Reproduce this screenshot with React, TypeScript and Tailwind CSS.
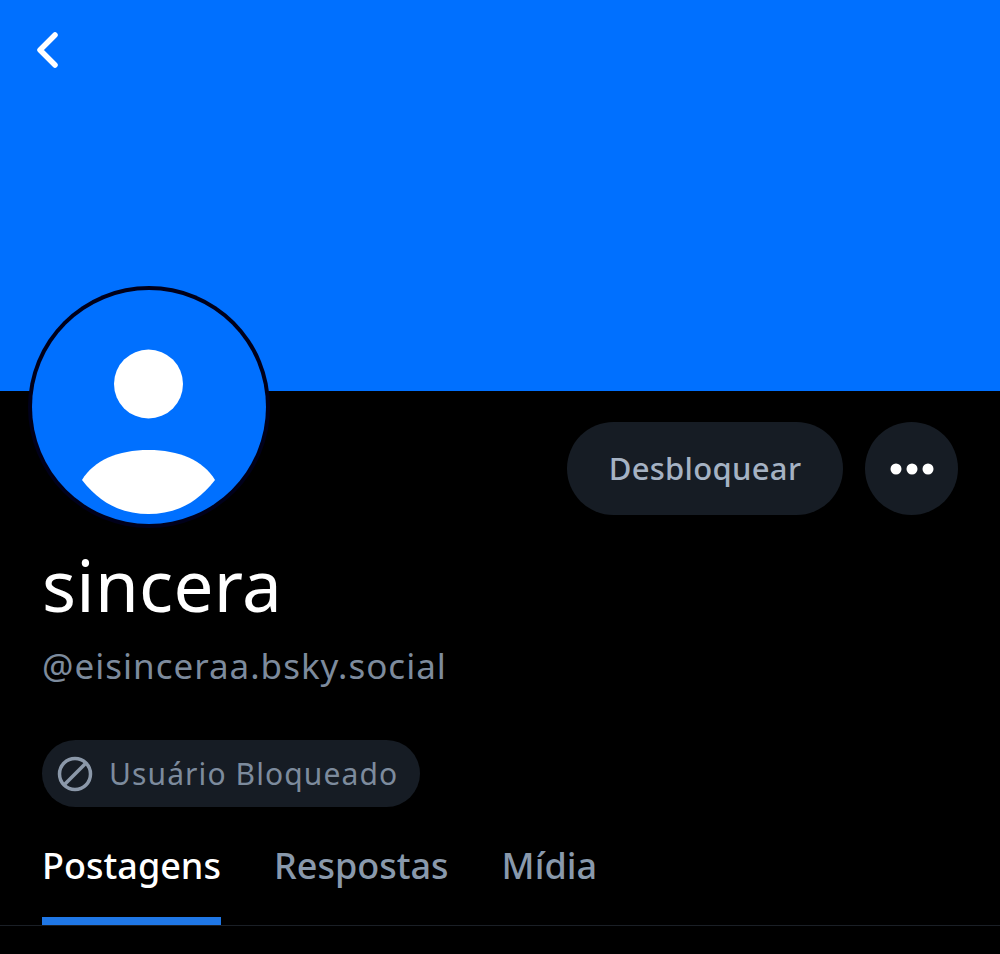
const font = "font-['Noto_Sans',sans-serif]";

function Avatar() {
  return (
    <div className="absolute left-[28px] top-[286px] h-[242px] w-[242px] rounded-full bg-[#00001a] p-[4px]">
      <svg viewBox="0 0 234 234" className="h-full w-full">
        <circle cx="117" cy="117" r="117" fill="#0070ff" />
        <circle cx="116.5" cy="94" r="34.5" fill="#ffffff" />
        <path d="M50 190 C62 170 86 160 116.5 160 C147 160 171 170 183 190 C163 216 140 224 116.5 224 C93 224 70 216 50 190 Z" fill="#ffffff" />
      </svg>
    </div>
  );
}

export default function App() {
  return (
    <div className={`relative h-[954px] w-[1000px] overflow-hidden bg-black ${font}`}>
      <div className="h-[391px] bg-[#0070ff] pl-[36px] pt-[32px]">
        <svg viewBox="0 0 22 36" className="h-[36px] w-[22px]" fill="none" stroke="#ffffff" strokeWidth="5.5" strokeLinecap="round" strokeLinejoin="round">
          <path d="M19 3 L4 18 L19 33" />
        </svg>
      </div>
      <Avatar />

      <div className="flex justify-end gap-[22px] pr-[42px] pt-[31px]">
        <button type="button" className="flex h-[93px] w-[276px] items-center justify-center rounded-full bg-[#161c24] text-[31px] font-medium tracking-[0.3px] text-[#a5b2c3]">
          Desbloquear
        </button>
        <button type="button" className="flex h-[93px] w-[93px] items-center justify-center rounded-full bg-[#161c24] text-white">
          <svg viewBox="0 0 44 12" className="h-[12px] w-[44px]" fill="#ffffff">
            <circle cx="6" cy="6" r="5.5" />
            <circle cx="22" cy="6" r="5.5" />
            <circle cx="38" cy="6" r="5.5" />
          </svg>
        </button>
      </div>

      <div className="pl-[42px]">
        <h1 className="mt-[25px] text-[71px] font-normal leading-[90px] tracking-[0.3px] text-white">sincera</h1>
        <p className="mt-[13px] text-[35px] leading-[46px] tracking-[1px] text-[#7d8b9d]">@eisinceraa.bsky.social</p>
        <div className="mt-[51px] flex h-[67px] w-[378px] items-center gap-[16px] rounded-full bg-[#161c24] pl-[15px]">
          <svg viewBox="0 0 36 36" className="h-[36px] w-[36px] shrink-0" fill="none" stroke="#8b98a9" strokeWidth="3.5">
            <circle cx="18" cy="18" r="15.5" />
            <path d="M7 29 L29 7" />
          </svg>
          <span className="text-[30px] tracking-[1.1px] text-[#7d8b9d]">Usuário Bloqueado</span>
        </div>
      </div>

      <div className="mt-[28px] flex h-[91px] gap-[53px] border-b border-[#1a1f26] pl-[42px] text-[36px] font-medium">
        <div className="flex w-[179px] flex-col items-center justify-between text-white">
          <span className="leading-[62px]">Postagens</span>
          <div className="h-[8px] w-full bg-[#1f77e6]" />
        </div>
        <span className="leading-[62px] text-[#8999ac]">Respostas</span>
        <span className="leading-[62px] text-[#8999ac]">Mídia</span>
      </div>
    </div>
  );
}
